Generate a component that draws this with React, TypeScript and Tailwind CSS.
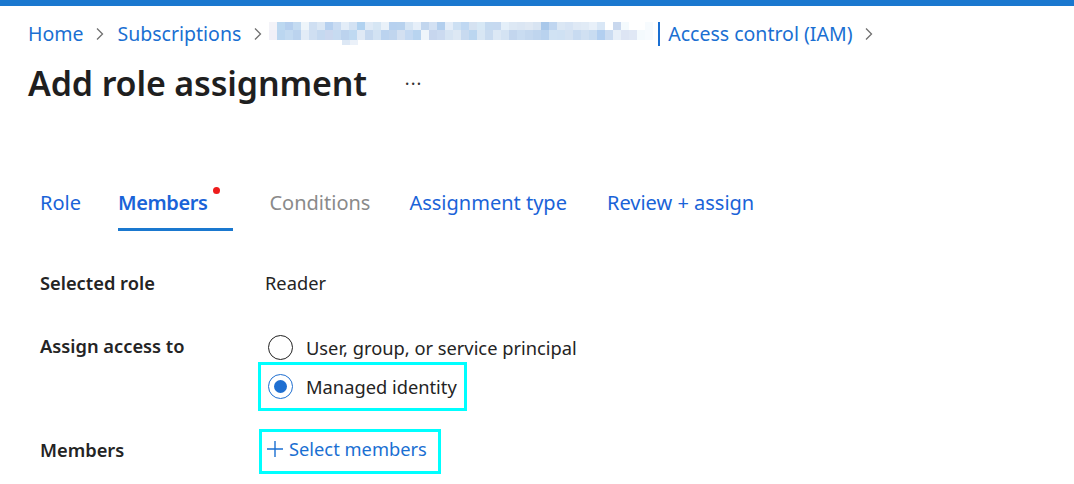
import React from "react";

const blurColors = [
  "#f3f3f8", "#bcd8f0", "#b5cfee", "#c4dbf1", "#eef5fa", "#cfdff2", "#dbe7f4", "#b6d0ef",
  "#cadcf2", "#e3edf8", "#d3e2f3", "#b1d2f0", "#dfeaf6", "#d6e6f4", "#e9f1f9", "#b7d1ef",
  "#b8d2ee", "#d6e5f4", "#e6eff9", "#c2d6ee", "#d3e1f3", "#b3cfee", "#e4edf8", "#cde0f3",
  "#c0d8f2", "#d5e2f1", "#d7e8f5", "#c5daf0", "#c6d9f0", "#e4eff9", "#dde8f4", "#dbe6f3",
  "#dfe8f3", "#d8e4f2", "#a9c8ea", "#c0d6f0", "#dbe7f4", "#d7e4f4", "#dfe9f5", "#e1ebf6",
  "#e8f0f9", "#d9e7f6", "#ffffff", "#c9d8ee", "#f4fafd", "#ffffff", "#ffffff", "#f7fbfe",
];
const blurColors2 = [
  "#f1f0f8", "#bbd6f0", "#c3daf1", "#bbd3ee", "#e2ecf7", "#cfdff2", "#c5d9f0", "#cbd8ef",
  "#c7dbf1", "#bcd3ee", "#bfd9f1", "#dfe9f5", "#c5d8ef", "#d2e2f3", "#bbd3ef", "#c0d5ee",
  "#d3e0f1", "#c4d9f2", "#b8d4f0", "#eef5fb", "#c7d6ee", "#cbdaf0", "#d6e4f3", "#dde8f4",
  "#c8daf0", "#bbd6f0", "#d8e6f4", "#c9dbf0", "#dce8f5", "#d4e3f3", "#c3d6ee", "#c9dcf1",
  "#c4d8ef", "#bfd5ee", "#b9d2ee", "#d0e2f3", "#cfe1f3", "#d4e2f2", "#c8dbf1", "#d0e0f2",
  "#c8dcf1", "#b2cff0", "#cbdcf1", "#e7eff8", "#dde5f4", "#e0e8f5", "#f4fafd", "#f7fbfe",
];

function Chevron({ className = "mx-[12px]" }: { className?: string }) {
  return (
    <svg width="10" height="16" viewBox="0 0 10 16" className={"shrink-0 " + className}>
      <path d="M2 2.5 L7.5 8 L2 13.5" fill="none" stroke="#707070" strokeWidth="1.3" />
    </svg>
  );
}

function Radio({ checked }: { checked?: boolean }) {
  return (
    <span
      className={
        "flex h-[25px] w-[25px] shrink-0 items-center justify-center rounded-full border " +
        (checked ? "border-[#1f6fd1]" : "border-[#222]")
      }
    >
      {checked && <span className="h-[13px] w-[13px] rounded-full bg-[#1f6fd1]" />}
    </span>
  );
}

export default function App() {
  return (
    <div
      className="h-[484px] w-[1074px] overflow-hidden bg-white text-[#242424]"
      style={{ fontFamily: '"Noto Sans", "Open Sans", sans-serif' }}
    >
      <div className="h-[6px] bg-[#1a78cf]" />

      {/* breadcrumb */}
      <div className="mt-[16px] flex h-[24px] items-center pl-[28px] text-[19.5px] leading-none text-[#1a6fd2]">
        <span>Home</span>
        <Chevron />
        <span>Subscriptions</span>
        <Chevron className="ml-[12px] mr-[6px]" />
        <div className="flex h-[25px] w-[386px] flex-col">
          <div className="flex h-[8px]">
            {blurColors.map((c, i) => (
              <span key={i} className="h-full w-[8px]" style={{ background: c }} />
            ))}
          </div>
          <div className="flex h-[10px]">
            {blurColors2.map((c, i) => (
              <span key={i} className="h-full w-[8px]" style={{ background: c }} />
            ))}
          </div>
          <div className="ml-[73px] flex h-[5px]">
            <span className="h-full w-[8px] bg-[#dde8f5]" />
            <span className="h-full w-[8px] bg-[#ebf1f9]" />
          </div>
        </div>
        <span className="ml-[3px] h-[24px] w-[2px] bg-[#1a6fd2]" />
        <span className="ml-[8px]">Access control (IAM)</span>
        <Chevron />
      </div>

      {/* title */}
      <div className="mt-[20px] flex items-center pl-[28px]">
        <h1 className="text-[34px] font-semibold leading-none tracking-[-0.15px] text-[#1f1f1f]">
          Add role assignment
        </h1>
        <span className="ml-[38px] text-[18px] leading-none tracking-[1px] text-[#333]">···</span>
      </div>

      {/* tabs */}
      <div className="mt-[93px] flex items-end pl-[40px] text-[20px] leading-none">
        <div className="pb-[18px] text-[#1a63d8]">Role</div>
        <div className="relative ml-[37px] border-b-[3px] border-[#1a78cf] pb-[15px] pr-[26px] font-semibold tracking-[-0.4px] text-[#1a63d8]">
          Members
          <span className="absolute right-[13px] top-[-6px] h-[7px] w-[7px] rounded-full bg-[#ee1c1c]" />
        </div>
        <div className="ml-[36px] pb-[18px] text-[#8a8a8a]">Conditions</div>
        <div className="ml-[39px] pb-[18px] text-[#1a63d8]">Assignment type</div>
        <div className="ml-[40px] pb-[18px] text-[#1a63d8]">Review + assign</div>
      </div>

      {/* form */}
      <div className="mt-[43px] pl-[40px] text-[18.3px] leading-none">
        <div className="flex items-center">
          <div className="w-[225px] font-semibold">Selected role</div>
          <div>Reader</div>
        </div>

        <div className="mt-[41px] flex">
          <div className="w-[218px] pt-[4px] font-semibold">Assign access to</div>
          <div className="flex flex-col">
            <div className="flex items-center px-[10px] py-[2px]">
              <Radio />
              <span className="ml-[13px]">User, group, or service principal</span>
            </div>
            <div className="flex items-center self-start border-[3px] border-[#00ffff] px-[7px] py-[9px]">
              <Radio checked />
              <span className="ml-[13px]">Managed identity</span>
            </div>
          </div>
        </div>

        <div className="mt-[18px] flex items-center">
          <div className="w-[219px] pb-[3px] font-semibold">Members</div>
          <div className="flex items-center border-[3px] border-[#00ffff] py-[10px] pl-[4px] pr-[11px] text-[#1a6fd2]">
            <svg width="18" height="18" viewBox="0 0 18 18" className="mr-[5px] -translate-y-[2px]">
              <path d="M9 1 V17 M1 9 H17" stroke="#1a6fd2" strokeWidth="1.4" />
            </svg>
            <span className="-translate-y-[2px]">Select members</span>
          </div>
        </div>
      </div>
    </div>
  );
}
